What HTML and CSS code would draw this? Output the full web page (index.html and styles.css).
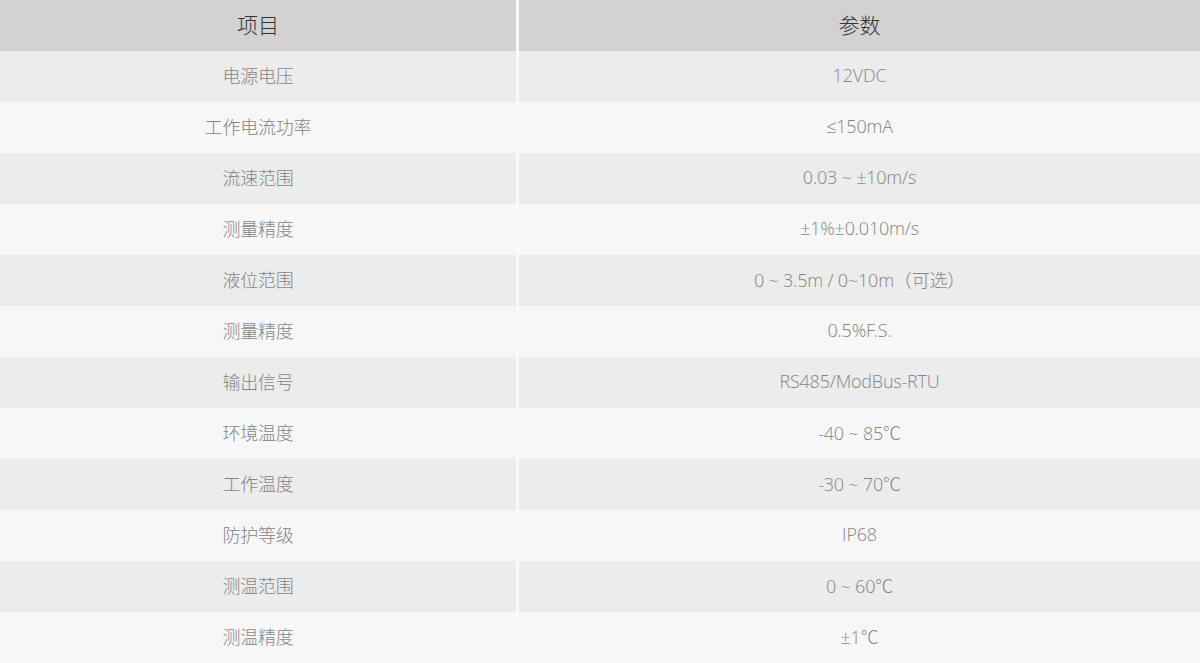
FILE: index.html
```html
<!DOCTYPE html>
<html lang="zh-CN">
<head>
<meta charset="utf-8">
<title>参数表</title>
<link rel="stylesheet" href="styles.css">
</head>
<body>
<div class="spec">
  <div class="cell head">项目</div><div class="cell head">参数</div>
  <div class="cell odd">电源电压</div><div class="cell odd">12VDC</div>
  <div class="cell even">工作电流功率</div><div class="cell even">≤150mA</div>
  <div class="cell odd">流速范围</div><div class="cell odd">0.03 ~ ±10m/s</div>
  <div class="cell even">测量精度</div><div class="cell even">±1%±0.010m/s</div>
  <div class="cell odd">液位范围</div><div class="cell odd">0 ~ 3.5m / 0~10m（可选）</div>
  <div class="cell even">测量精度</div><div class="cell even">0.5%F.S.</div>
  <div class="cell odd">输出信号</div><div class="cell odd">RS485/ModBus-RTU</div>
  <div class="cell even">环境温度</div><div class="cell even">-40 ~ 85℃</div>
  <div class="cell odd">工作温度</div><div class="cell odd">-30 ~ 70℃</div>
  <div class="cell even">防护等级</div><div class="cell even">IP68</div>
  <div class="cell odd">测温范围</div><div class="cell odd">0 ~ 60℃</div>
  <div class="cell even">测温精度</div><div class="cell even">±1℃</div>
</div>
</body>
</html>
```
FILE: styles.css
```css
html, body {
  margin: 0;
  padding: 0;
  background: #fafafa;
}
.spec {
  display: grid;
  grid-template-columns: 516px 1fr;
  column-gap: 3px;
  width: 1200px;
  background: #fafafa;
  font-family: "Open Sans Light", "Open Sans", "Noto Sans CJK SC Light", "Noto Sans CJK SC", sans-serif;
}
.cell {
  height: 51px;
  box-sizing: border-box;
  padding-bottom: 3px;
  display: flex;
  align-items: center;
  justify-content: center;
  font-size: 18px;
  font-weight: 300;
  letter-spacing: -0.2px;
  color: #858585;
}
.head {
  background: #d3d1d2;
  color: #333;
  font-size: 21px;
  font-weight: 300;
  letter-spacing: 0;
}
.odd {
  background: #ececec;
}
.even {
  background: #f7f7f7;
}
```
